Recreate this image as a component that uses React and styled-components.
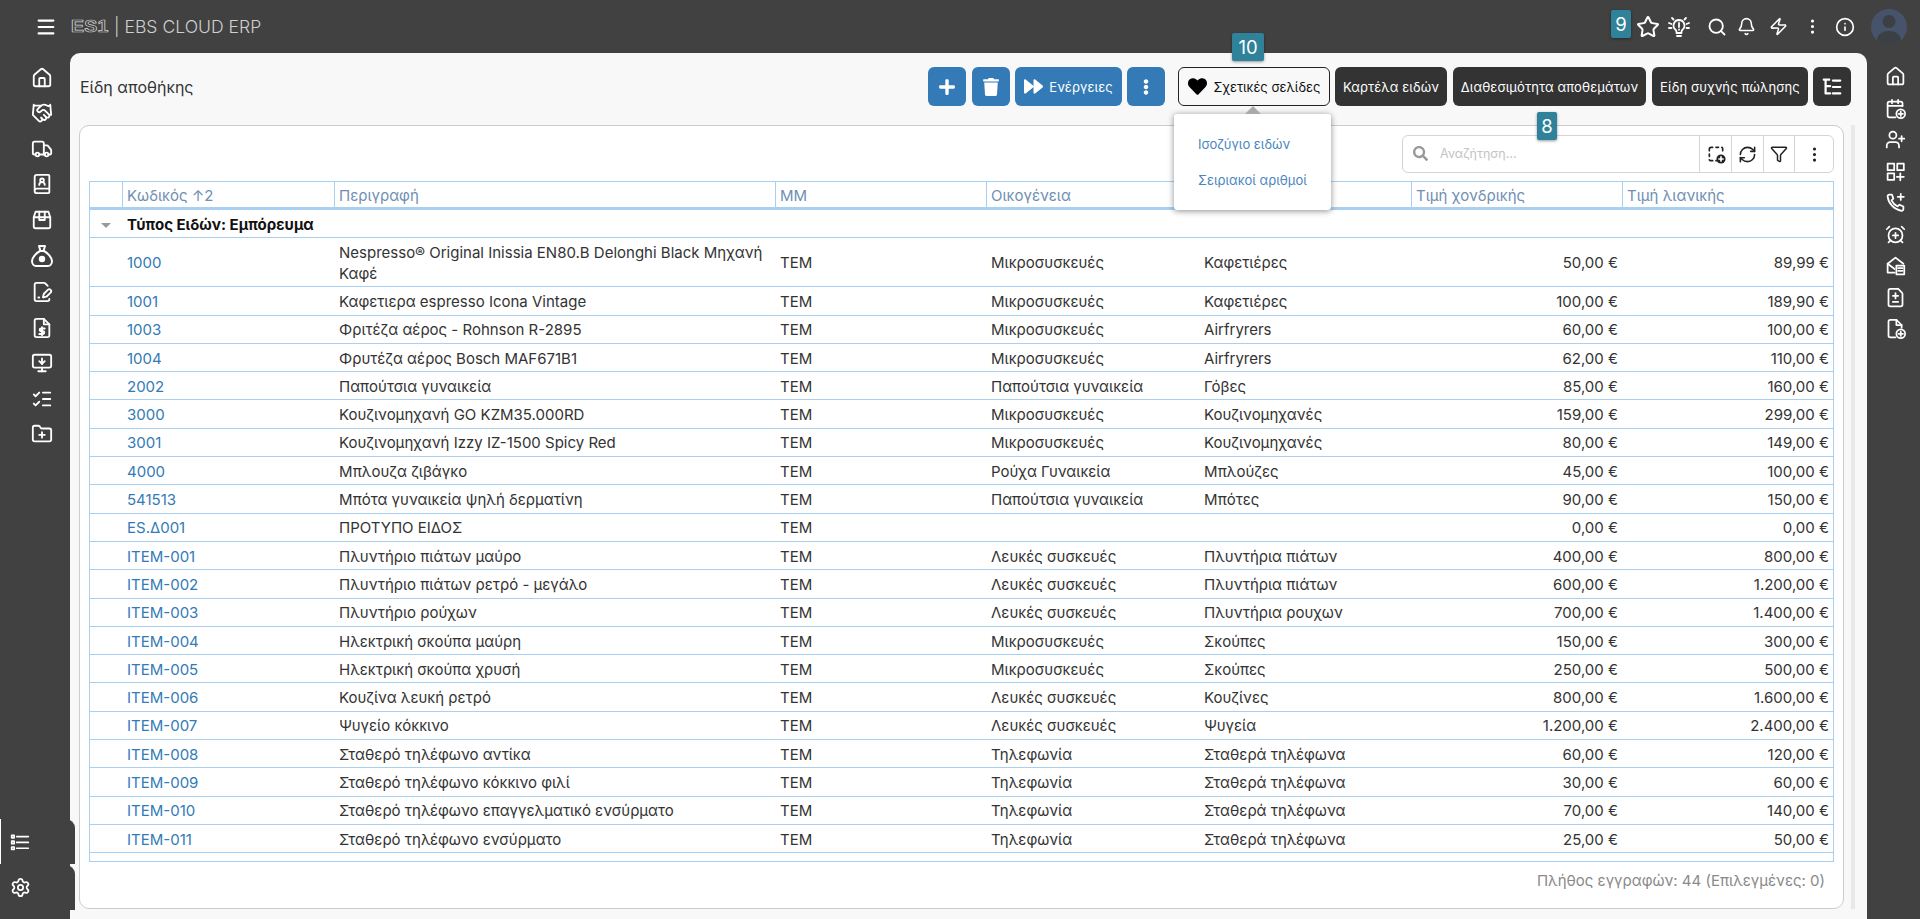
import React from "react";
import styled, { createGlobalStyle } from "styled-components";
import {
  Menu, Star, Search, Bell, Zap, EllipsisVertical, Info, House, Handshake, Truck, BookUser,
  FilePenLine, MonitorDown, ListChecks, FolderPlus, Settings, UserPlus, AlarmClockPlus, FileDiff,
  RefreshCw, Funnel,
} from "lucide-react";
import { FaPlus, FaTrash, FaForward, FaEllipsisV, FaHeart, FaSearch } from "react-icons/fa";

const Global = createGlobalStyle`
  html, body { margin: 0; padding: 0; height: 100%; overflow: hidden; }
  body { font-family: Inter, "Noto Sans", sans-serif; background: #414141; color: #333; }
  * { box-sizing: border-box; }
`;

const Shell = styled.div`
  width: 100vw; height: 100vh;
  display: grid;
  grid-template-columns: 70px 1fr 53px;
  grid-template-rows: 53px 1fr;
  background: #414141;
  overflow: hidden;
`;
const TopBar = styled.header`
  grid-column: 1 / 4;
  display: flex; align-items: center;
  padding: 0 13px 0 35px;
  color: #fff;
  position: relative;
`;
const Logo = styled.span`
  margin-left: 14px;
  font: 800 16px "Liberation Sans", sans-serif;
  letter-spacing: 0.2px;
  color: transparent;
  -webkit-text-stroke: 0.7px #cfcfcf;
  transform: scaleX(1.22);
  transform-origin: left center;
  width: 43px;
`;
const Brand = styled.span`
  font: 300 17.6px Inter, sans-serif;
  color: #cfcfcf;
`;
const TopRight = styled.div`
  margin-left: auto; display: flex; align-items: center;
`;
const TopBtn = styled.span`
  display: flex; justify-content: center; align-items: center;
  width: ${(p) => p.$w || 32}px;
  margin-left: ${(p) => p.$ml || 0}px;
`;
const Avatar = styled.span`
  width: 36px; height: 36px; border-radius: 50%;
  background: #46536a; margin-left: 9px; overflow: hidden; display: block;
`;
const SideLeft = styled.nav`
  display: flex; flex-direction: column; align-items: center;
  position: relative; z-index: 3;
`;
const SideIcons = styled.div`
  display: flex; flex-direction: column; align-items: center; gap: 13.4px;
  padding: 14px 0 0 14px; color: #fff;
`;
const BottomTabs = styled.div`
  margin-top: auto; margin-bottom: 9px; align-self: flex-start;
  display: flex; flex-direction: column; gap: 1px;
`;
const BottomTab = styled.div`
  width: 75px; height: 45px;
  background: #414141;
  border-top-right-radius: 9px;
  border-left: ${(p) => (p.$active ? "1px solid #fff" : "1px solid transparent")};
  display: flex; align-items: center; padding-left: 9px; color: #fff;
`;
const SideRight = styled.nav`
  display: flex; flex-direction: column; align-items: center; gap: 10.5px;
  padding: 13px 0 0 3px; color: #fff;
`;
const Panel = styled.main`
  background: #f8f8f8;
  border-radius: 10px 10px 0 0;
  padding: 14px 12px 10px 9px;
  display: flex; flex-direction: column;
  min-height: 0; min-width: 0;
`;
const Toolbar = styled.div`
  display: flex; align-items: center; height: 39px;
  margin-bottom: 19px; padding-right: 4px;
`;
const Title = styled.h1`
  margin: 0 0 0 1px; font: 400 16px Inter, sans-serif; color: #333;
`;
const Buttons = styled.div`
  margin-left: auto; display: flex; align-items: stretch; height: 39px;
`;
const Btn = styled.button`
  height: 39px; border: none; border-radius: 6px;
  background: ${(p) => (p.$dark ? "#333" : "#337ab7")};
  color: #fff;
  font: 400 13px Inter, sans-serif;
  letter-spacing: 0.1px;
  width: ${(p) => p.$w}px;
  margin-right: ${(p) => p.$mr ?? 5}px;
  display: flex; align-items: center; justify-content: center; gap: 6px;
  padding: 0;
`;
const RelatedWrap = styled.div`
  position: relative; margin: 0 5px 0 8px;
`;
const RelatedBtn = styled.button`
  width: 152px; height: 39px; border: 1px solid #222; border-radius: 6px;
  background: #f8f8f8; color: #111;
  font: 400 13px Inter, sans-serif;
  display: flex; align-items: center; justify-content: center; gap: 7px; padding: 0;
`;
const Popup = styled.div`
  position: absolute; top: 47px; left: -4px; width: 157px; height: 96px; z-index: 5;
  background: #fff; border-radius: 3px;
  box-shadow: 0 1px 6px rgba(0,0,0,.45);
  padding: 22px 0 0 24px;
  display: flex; flex-direction: column; gap: 20px;
  &::before {
    content: ""; position: absolute; left: 71px; top: -8px;
    border: 8px solid transparent; border-top: 0; border-bottom-color: #aaa;
  }
`;
const PopLink = styled.a`
  font: 400 13px/16px Inter, sans-serif; color: #4a86c0;
`;
const Badge = styled.span`
  position: absolute; z-index: 6;
  top: ${(p) => p.$top}px; left: ${(p) => p.$left}px;
  width: ${(p) => p.$w}px; height: 28px;
  background: #2f8299; color: #fff; border-radius: 2px;
  box-shadow: 0 1px 3px rgba(0,0,0,.4);
  font: 400 18.5px/28px Inter, sans-serif; text-align: center;
`;
const CardRow = styled.div`
  flex: 1; display: flex; gap: 7px; min-height: 0;
`;
const Card = styled.section`
  flex: 1; min-width: 0;
  background: #fff; border: 1px solid #ccc; border-radius: 10px;
  padding: 9px;
  display: flex; flex-direction: column;
  position: relative;
`;
const Track = styled.div`
  width: 4px; background: #e8e8e8;
`;
const SearchRow = styled.div`
  display: flex; justify-content: flex-end; margin-bottom: 8px;
`;
const SearchBox = styled.div`
  width: 432px; height: 38px; border: 1px solid #d4d4d4; border-radius: 6px;
  display: flex; align-items: stretch;
`;
const SearchField = styled.div`
  flex: 1; display: flex; align-items: center; gap: 12px; padding-left: 10px;
  color: #c4c4c4; font: 400 12.5px Inter, sans-serif; padding-bottom: 2px;
`;
const SearchTool = styled.div`
  width: ${(p) => p.$w}px; border-left: 1px solid #d4d4d4;
  display: flex; align-items: center; justify-content: center; color: #222;
`;
const TableWrap = styled.div`
  height: 681px; overflow: hidden;
  border: 1px solid #a9d0f0;
`;
const Table = styled.table`
  width: 100%; table-layout: fixed; border-collapse: separate; border-spacing: 0;
  font: 400 15px/21px Inter, sans-serif; color: #333;
`;
const Th = styled.th`
  height: 28px; padding: 1px 4px 0; text-align: left;
  font-weight: 400; color: #6f8fb3;
  border-bottom: 3px solid #a9d0f0;
  border-left: ${(p) => (p.$first ? "none" : "1px solid #a9d0f0")};
  white-space: nowrap; overflow: hidden;
`;
const GroupCell = styled.td`
  height: 28.3px; padding: 2px 5px 0; font-weight: 700; color: #111;
  border-bottom: 1px solid #a9d0f0;
`;
const Caret = styled.td`
  border-bottom: 1px solid #a9d0f0;
  text-align: center; padding-bottom: 4px;
  &::after { content: ""; display: inline-block; border: 5px solid transparent; border-top: 5px solid #999; border-bottom: 0; }
`;
const Td = styled.td`
  height: ${(p) => p.$h || 28.3}px; padding: 1px 4px 0 5px;
  border-bottom: 1px solid #a9d0f0;
  text-align: ${(p) => (p.$right ? "right" : "left")};
  color: ${(p) => (p.$link ? "#337ab7" : "#333")};
  white-space: normal;
`;
const Footer = styled.div`
  margin-top: auto; padding: 0 9px 8px 0; text-align: right;
  font: 400 15px/21px Inter, sans-serif; color: #8a8a8a;
`;

const S = ({ size = 22, children, sw = 2, fill = "none" }) => (
  <svg width={size} height={size} viewBox="0 0 24 24" fill={fill} stroke="currentColor" strokeWidth={sw} strokeLinecap="round" strokeLinejoin="round">{children}</svg>
);
const BoxTab = () => <S><path d="M5 3h14l2 6v10a2 2 0 0 1-2 2H5a2 2 0 0 1-2-2V9z" /><path d="M3 9h18M9 3v9h6V3" /></S>;
const MoneyBag = () => <S size={24}><path d="M9 2h6l-1.5 5h-3z" /><path d="M10 7h4c4 2 8 7 8 10 0 3-2 5-4 5H6c-2 0-4-2-4-5 0-3 4-8 8-10z" /><circle cx="12" cy="15" r="2.2" fill="currentColor" /></S>;
const FileDollar = () => <S><path d="M14 2H6a2 2 0 0 0-2 2v16a2 2 0 0 0 2 2h12a2 2 0 0 0 2-2V8z" /><path d="M14 2v6h6" /><path d="M15 12.5h-4a1.5 1.5 0 0 0 0 3h2a1.5 1.5 0 0 1 0 3H9M12 11v9" /></S>;
const CalPlus = () => <S size={21}><path d="M20 9V6a2 2 0 0 0-2-2H5a2 2 0 0 0-2 2v14a2 2 0 0 0 2 2h7" /><path d="M8 2v4M15 2v4M3 9h17" /><circle cx="18" cy="18" r="5" /><path d="M18 15.5v5M15.5 18h5" /></S>;
const GridPlus = () => <S size={21}><rect x="3" y="3" width="7.5" height="7.5" /><rect x="14" y="3" width="7.5" height="7.5" /><rect x="3" y="14" width="7.5" height="7.5" /><path d="M17.5 14v8M13.5 18h8" /></S>;
const PhonePlus = () => <S size={21}><path d="M21 16.5v3a2 2 0 0 1-2.2 2A19 19 0 0 1 3 5.2 2 2 0 0 1 5 3h3l1.5 4.5L7.5 9.5a14 14 0 0 0 7 7l2-2z" /><path d="M18 2v7M14.5 5.5h7" /></S>;
const MailDoc = () => <S size={21}><path d="M11 20H3V10l9-7 9 7" /><path d="M3 10l8 6" /><rect x="13" y="12" width="9" height="10" /><path d="M15 15h5M15 18h5" /></S>;
const FileCirclePlus = () => <S size={21}><path d="M12 22H6a2 2 0 0 1-2-2V4a2 2 0 0 1 2-2h7l6 6v3" /><path d="M13 2v6h6" /><circle cx="18" cy="18" r="5" /><path d="M18 15.5v5M15.5 18h5" /></S>;
const DashPlus = () => <S size={20}><path d="M8 4H6a2 2 0 0 0-2 2v2M12 4h3M19 4a2 2 0 0 1 1 2v2M4 12v3M4 19a2 2 0 0 0 2 1h2M12 20h1" /><circle cx="18" cy="18" r="5.5" fill="#222" stroke="none" /><path d="M18 15.5v5M15.5 18h5" stroke="#fff" /></S>;
const BulbRays = () => <S size={24} sw={1.8}><path d="M12 5a5.5 5.5 0 0 0-3.5 9.7c.6.6 1 1.3 1 2.3v1h5v-1c0-1 .4-1.7 1-2.3A5.5 5.5 0 0 0 12 5z" /><path d="M10 21h4M12 8v4M12 14.5v.3M2 8l2.5 1M2 13h2.5M22 8l-2.5 1M22 13h-2.5M5 3l1.5 1.5M19 3l-1.5 1.5" /></S>;
const ListTree = () => <S size={22} sw={2.4}><path d="M5 4v15h5M5 11h5M3 4h6M13 5h8M13 12h8M13 19h8" /></S>;
const ListDots = () => (
  <S size={20} sw={2}><rect x="2" y="4" width="3" height="3" /><rect x="2" y="11" width="3" height="3" /><rect x="2" y="18" width="3" height="3" /><path d="M8 5.5h14M8 12.5h14M8 19.5h14" /></S>
);
const UserShape = () => (
  <svg width="36" height="36" viewBox="0 0 36 36" fill="#3c3f44"><circle cx="18" cy="12.5" r="6.5" /><path d="M6 32c0-7 6-10 12-10s12 3 12 10v4H6z" /></svg>
);

const rows = [
  ["1001", "Καφετιερα espresso Icona Vintage", "Μικροσυσκευές", "Καφετιέρες", "100,00 €", "189,90 €"],
  ["1003", "Φριτέζα αέρος - Rohnson R-2895", "Μικροσυσκευές", "Airfryrers", "60,00 €", "100,00 €"],
  ["1004", "Φρυτέζα αέρος Bosch MAF671B1", "Μικροσυσκευές", "Airfryrers", "62,00 €", "110,00 €"],
  ["2002", "Παπούτσια γυναικεία", "Παπούτσια γυναικεία", "Γόβες", "85,00 €", "160,00 €"],
  ["3000", "Κουζινομηχανή GO KZM35.000RD", "Μικροσυσκευές", "Κουζινομηχανές", "159,00 €", "299,00 €"],
  ["3001", "Κουζινομηχανή Izzy IZ-1500 Spicy Red", "Μικροσυσκευές", "Κουζινομηχανές", "80,00 €", "149,00 €"],
  ["4000", "Μπλουζα ζιβάγκο", "Ρούχα Γυναικεία", "Μπλούζες", "45,00 €", "100,00 €"],
  ["541513", "Μπότα γυναικεία ψηλή δερματίνη", "Παπούτσια γυναικεία", "Μπότες", "90,00 €", "150,00 €"],
  ["ES.Δ001", "ΠΡΟΤΥΠΟ ΕΙΔΟΣ", "", "", "0,00 €", "0,00 €"],
  ["ITEM-001", "Πλυντήριο πιάτων μαύρο", "Λευκές συσκευές", "Πλυντήρια πιάτων", "400,00 €", "800,00 €"],
  ["ITEM-002", "Πλυντήριο πιάτων ρετρό - μεγάλο", "Λευκές συσκευές", "Πλυντήρια πιάτων", "600,00 €", "1.200,00 €"],
  ["ITEM-003", "Πλυντήριο ρούχων", "Λευκές συσκευές", "Πλυντήρια ρουχων", "700,00 €", "1.400,00 €"],
  ["ITEM-004", "Ηλεκτρική σκούπα μαύρη", "Μικροσυσκευές", "Σκούπες", "150,00 €", "300,00 €"],
  ["ITEM-005", "Ηλεκτρική σκούπα χρυσή", "Μικροσυσκευές", "Σκούπες", "250,00 €", "500,00 €"],
  ["ITEM-006", "Κουζίνα λευκή ρετρό", "Λευκές συσκευές", "Κουζίνες", "800,00 €", "1.600,00 €"],
  ["ITEM-007", "Ψυγείο κόκκινο", "Λευκές συσκευές", "Ψυγεία", "1.200,00 €", "2.400,00 €"],
  ["ITEM-008", "Σταθερό τηλέφωνο αντίκα", "Τηλεφωνία", "Σταθερά τηλέφωνα", "60,00 €", "120,00 €"],
  ["ITEM-009", "Σταθερό τηλέφωνο κόκκινο φιλί", "Τηλεφωνία", "Σταθερά τηλέφωνα", "30,00 €", "60,00 €"],
  ["ITEM-010", "Σταθερό τηλέφωνο επαγγελματικό ενσύρματο", "Τηλεφωνία", "Σταθερά τηλέφωνα", "70,00 €", "140,00 €"],
  ["ITEM-011", "Σταθερό τηλέφωνο ενσύρματο", "Τηλεφωνία", "Σταθερά τηλέφωνα", "25,00 €", "50,00 €"],
];
const widths = [32, 212, 441, 211, 213, 212, 211];
const heads = ["Περιγραφή", "ΜΜ", "Οικογένεια", "Υποοικογένεια", "Τιμή χονδρικής", "Τιμή λιανικής"];

const Row = ({ r, h, desc }) => (
  <tr>
    <Td $h={h} />
    <Td $h={h} $link>{r[0]}</Td>
    <Td $h={h}>{desc || r[1]}</Td>
    <Td $h={h}>ΤΕΜ</Td>
    <Td $h={h}>{r[2]}</Td>
    <Td $h={h}>{r[3]}</Td>
    <Td $h={h} $right>{r[4]}</Td>
    <Td $h={h} $right>{r[5]}</Td>
  </tr>
);

export default function App() {
  return (
    <Shell>
      <Global />
      <TopBar>
        <Menu size={22} strokeWidth={2.4} />
        <Logo>ES1</Logo>
        <Brand>| EBS CLOUD ERP</Brand>
        <TopRight>
          <TopBtn $w={26}><Star size={24} strokeWidth={2} /></TopBtn>
          <TopBtn $w={36}><BulbRays /></TopBtn>
          <TopBtn $w={30} $ml={5}><Search size={20} strokeWidth={2.2} /></TopBtn>
          <TopBtn $w={28}><Bell size={19} strokeWidth={2} /></TopBtn>
          <TopBtn $w={36}><Zap size={19} strokeWidth={2} /></TopBtn>
          <TopBtn $w={32}><EllipsisVertical size={19} strokeWidth={2} /></TopBtn>
          <TopBtn $w={34}><Info size={20} strokeWidth={2} /></TopBtn>
          <Avatar><UserShape /></Avatar>
        </TopRight>
        <Badge $top={10} $left={1611} $w={20}>9</Badge>
        <Badge $top={33} $left={1232} $w={32}>10</Badge>
        <Badge $top={112} $left={1537} $w={20}>8</Badge>
      </TopBar>

      <SideLeft>
        <SideIcons>
          <House size={22} />
          <Handshake size={22} />
          <Truck size={22} />
          <BookUser size={22} />
          <BoxTab />
          <MoneyBag />
          <FilePenLine size={22} />
          <FileDollar />
          <MonitorDown size={22} />
          <ListChecks size={22} />
          <FolderPlus size={22} />
        </SideIcons>
        <BottomTabs>
          <BottomTab $active><ListDots /></BottomTab>
          <BottomTab><Settings size={21} /></BottomTab>
        </BottomTabs>
      </SideLeft>

      <Panel>
        <Toolbar>
          <Title>Είδη αποθήκης</Title>
          <Buttons>
            <Btn $w={38} $mr={6}><FaPlus size={18} /></Btn>
            <Btn $w={38}><FaTrash size={18} /></Btn>
            <Btn $w={107}><FaForward size={19} />Ενέργειες</Btn>
            <Btn $w={38}><FaEllipsisV size={16} /></Btn>
            <RelatedWrap>
              <RelatedBtn><FaHeart size={19} color="#000" />Σχετικές σελίδες</RelatedBtn>
              <Popup>
                <PopLink>Ισοζύγιο ειδών</PopLink>
                <PopLink>Σειριακοί αριθμοί</PopLink>
              </Popup>
            </RelatedWrap>
            <Btn $dark $w={112} $mr={6}>Καρτέλα ειδών</Btn>
            <Btn $dark $w={193} $mr={6}>Διαθεσιμότητα αποθεμάτων</Btn>
            <Btn $dark $w={156}>Είδη συχνής πώλησης</Btn>
            <Btn $dark $w={38} $mr={0}><ListTree /></Btn>
          </Buttons>
        </Toolbar>
        <CardRow>
          <Card>
            <SearchRow>
              <SearchBox>
                <SearchField><FaSearch size={15} color="#999" />Αναζήτηση...</SearchField>
                <SearchTool $w={32}><DashPlus /></SearchTool>
                <SearchTool $w={32}><RefreshCw size={19} strokeWidth={2} /></SearchTool>
                <SearchTool $w={31}><Funnel size={18} strokeWidth={2} /></SearchTool>
                <SearchTool $w={39}><EllipsisVertical size={19} /></SearchTool>
              </SearchBox>
            </SearchRow>
            <TableWrap>
              <Table>
                <colgroup>{widths.map((w, i) => <col key={i} style={{ width: w }} />)}<col /></colgroup>
                <thead>
                  <tr>
                    <Th $first />
                    <Th>Κωδικός ↑2</Th>
                    {heads.map((h) => <Th key={h}>{h}</Th>)}
                  </tr>
                </thead>
                <tbody>
                  <tr>
                    <Caret />
                    <GroupCell colSpan={7}>Τύπος Ειδών: Εμπόρευμα</GroupCell>
                  </tr>
                  <Row h={49} r={["1000", "", "Μικροσυσκευές", "Καφετιέρες", "50,00 €", "89,99 €"]} desc="Nespresso® Original Inissia EN80.B Delonghi Black Μηχανή Καφέ" />
                  {rows.map((r) => <Row key={r[0]} r={r} />)}
                </tbody>
              </Table>
            </TableWrap>
            <Footer>Πλήθος εγγραφών: 44 (Επιλεγμένες: 0)</Footer>
          </Card>
          <Track />
        </CardRow>
      </Panel>

      <SideRight>
        <House size={21} />
        <CalPlus />
        <UserPlus size={21} />
        <GridPlus />
        <PhonePlus />
        <AlarmClockPlus size={21} />
        <MailDoc />
        <FileDiff size={21} />
        <FileCirclePlus />
      </SideRight>
    </Shell>
  );
}
